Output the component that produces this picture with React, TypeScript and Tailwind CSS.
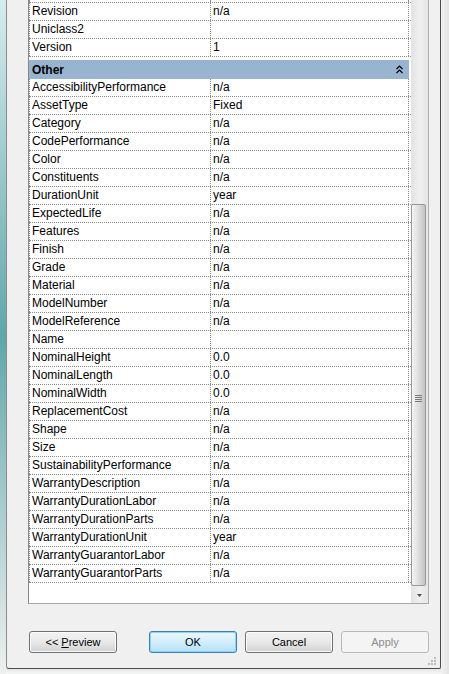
import React from "react";

const props: [string, string][] = [
	["AccessibilityPerformance", "n/a"],
	["AssetType", "Fixed"],
	["Category", "n/a"],
	["CodePerformance", "n/a"],
	["Color", "n/a"],
	["Constituents", "n/a"],
	["DurationUnit", "year"],
	["ExpectedLife", "n/a"],
	["Features", "n/a"],
	["Finish", "n/a"],
	["Grade", "n/a"],
	["Material", "n/a"],
	["ModelNumber", "n/a"],
	["ModelReference", "n/a"],
	["Name", ""],
	["NominalHeight", "0.0"],
	["NominalLength", "0.0"],
	["NominalWidth", "0.0"],
	["ReplacementCost", "n/a"],
	["Shape", "n/a"],
	["Size", "n/a"],
	["SustainabilityPerformance", "n/a"],
	["WarrantyDescription", "n/a"],
	["WarrantyDurationLabor", "n/a"],
	["WarrantyDurationParts", "n/a"],
	["WarrantyDurationUnit", "year"],
	["WarrantyGuarantorLabor", "n/a"],
	["WarrantyGuarantorParts", "n/a"],
];

function Row({ name, value, short }: { name?: string; value?: string; short?: boolean }) {
	return (
		<div
			className={`flex ${short ? "h-[3px]" : "h-[18px]"} border-b border-dotted border-[#8c8c8c]`}
		>
			<div className="w-[182px] border-l border-r border-dotted border-[#8c8c8c] pl-[2px] leading-[17px] whitespace-nowrap">
				{name}
			</div>
			<div className="w-[198px] border-r border-dotted border-[#8c8c8c] pl-[2px] leading-[17px] whitespace-nowrap">
				{value}
			</div>
		</div>
	);
}

function Chevrons() {
	return (
		<svg width="7" height="9" viewBox="0 0 7 9" className="block">
			<path d="M0.5 4 L3.5 1 L6.5 4" fill="none" stroke="#000" strokeWidth="1.2" />
			<path d="M0.5 8 L3.5 5 L6.5 8" fill="none" stroke="#000" strokeWidth="1.2" />
		</svg>
	);
}

function Scrollbar() {
	return (
		<div className="w-[17px] flex flex-col bg-gradient-to-r from-[#e3e3e3] via-[#efefef] to-[#e6e6e6]">
			<div className="h-[204px]" />
			<div className="h-[382px] mx-[0px] mr-[2px] rounded-[2px] border border-[#979797] bg-gradient-to-r from-[#f5f5f5] via-[#dedede] to-[#c4c4c4] flex items-center justify-center">
				<div className="flex flex-col gap-[1px] mt-[6px]">
					<div className="w-[7px] h-[1px] bg-[#7a7a7a]" />
					<div className="w-[7px] h-[1px] bg-[#7a7a7a]" />
					<div className="w-[7px] h-[1px] bg-[#7a7a7a]" />
					<div className="w-[7px] h-[1px] bg-[#7a7a7a]" />
				</div>
			</div>
			<div className="flex-1 flex items-start justify-center pt-[8px]">
				<svg width="5" height="3" viewBox="0 0 5 3" className="block">
					<path d="M0 0 H5 L2.5 3 Z" fill="#505050" />
				</svg>
			</div>
		</div>
	);
}

function Button({
	children,
	kind = "normal",
}: {
	children: React.ReactNode;
	kind?: "normal" | "default" | "disabled";
}) {
	const cls =
		kind === "default"
			? "border-[#3c7fb1] bg-gradient-to-b from-[#ecf7fd] via-[#d3eefc] to-[#b5e0f8] shadow-[inset_0_0_0_1px_#8fd3f7] text-black"
			: kind === "disabled"
				? "border-[#b6b9bb] bg-[#f4f4f4] text-[#8d8d8d]"
				: "border-[#707070] bg-gradient-to-b from-[#f2f2f2] via-[#e9e9e9] to-[#d2d2d2] shadow-[inset_0_0_0_1px_#fcfcfc] text-black";
	return (
		<div
			className={`w-[88px] h-[22px] rounded-[3px] border flex items-center justify-center text-[11px] ${cls}`}
		>
			{children}
		</div>
	);
}

export default function App() {
	return (
		<div className="w-[449px] h-[674px] flex bg-[#eceeee] font-['Liberation_Sans',Arial,sans-serif] text-black overflow-hidden">
			{/* left glass frame */}
			<div className="w-[6px] h-full bg-gradient-to-b from-[#d6ecec] via-[#5fa7aa] to-[#eef0f0]" />
			<div className="w-[435px] flex flex-col">
				<div className="h-[669px] border-l border-r border-b border-l-[#8a8a8a] border-r-[#4a4a4a] border-b-[#4a4a4a] rounded-bl-[3px] rounded-br-[2px] bg-[#f0f0f0] flex flex-col">
					<div className="pl-[21px]">
						<div className="w-[401px] h-[604px] border-l border-r border-b border-l-[#828790] border-r-[#b0b0b0] border-b-[#a9a9a9] bg-white flex text-[12px]">
							<div className="w-[382px] flex flex-col">
								<Row short />
								<Row name="Revision" value="n/a" />
								<Row name="Uniclass2" value="" />
								<Row name="Version" value="1" />
								<div className="h-[3px]" />
								<div className="w-[380px] h-[19px] bg-[#99b4d1] flex items-center justify-between pl-[3px] pr-[6px] font-bold">
									<span>Other</span>
									<Chevrons />
								</div>
								{props.map(([n, v]) => (
									<Row key={n} name={n} value={v} />
								))}
							</div>
							<Scrollbar />
						</div>
					</div>
					<div className="mt-[27px] pl-[22px] flex">
						<Button>
							&lt;&lt; <span className="underline ml-[3px]">P</span>review
						</Button>
						<div className="ml-[32px] flex gap-[8px]">
							<Button kind="default">OK</Button>
							<Button>Cancel</Button>
							<Button kind="disabled">Apply</Button>
						</div>
					</div>
					<div className="flex-1 flex justify-end items-end pr-[4px] pb-[3px]">
						<div className="grid grid-cols-3 gap-[1px]">
							<div className="w-[2px] h-[2px]" />
							<div className="w-[2px] h-[2px]" />
							<div className="w-[2px] h-[2px] bg-[#bcbcbc]" />
							<div className="w-[2px] h-[2px]" />
							<div className="w-[2px] h-[2px] bg-[#bcbcbc]" />
							<div className="w-[2px] h-[2px] bg-[#bcbcbc]" />
							<div className="w-[2px] h-[2px] bg-[#bcbcbc]" />
							<div className="w-[2px] h-[2px] bg-[#bcbcbc]" />
							<div className="w-[2px] h-[2px] bg-[#bcbcbc]" />
						</div>
					</div>
				</div>
				<div className="flex-1 bg-gradient-to-b from-[#e6e8e8] to-[#f6f6f6]" />
			</div>
			{/* right glass frame */}
			<div className="w-[8px] h-full bg-gradient-to-r from-[#f2f2f2] to-[#e4e4e4]" />
		</div>
	);
}
